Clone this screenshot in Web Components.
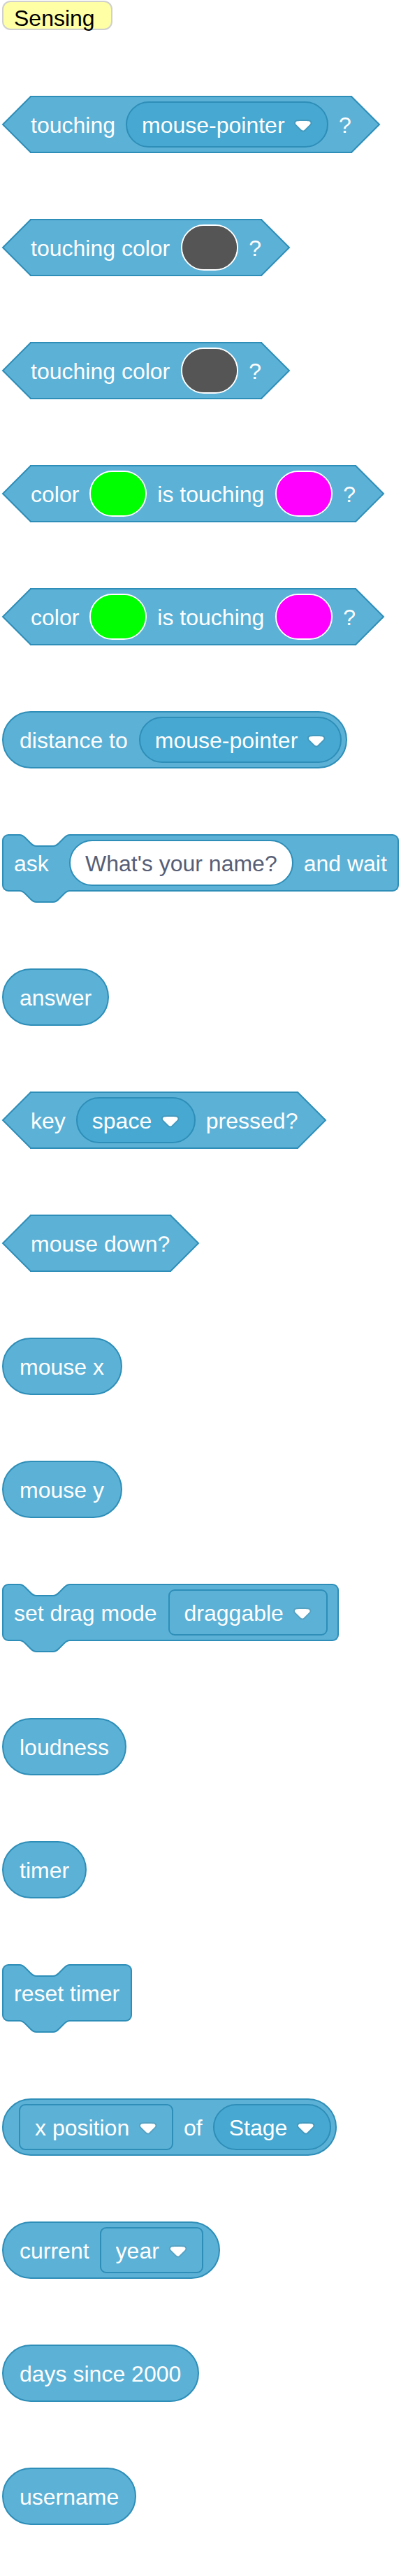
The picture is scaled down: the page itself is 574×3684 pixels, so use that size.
<!DOCTYPE html>
<html lang="en">
<head>
<meta charset="utf-8">
<title>Sensing blocks</title>
<style>
  body {
    margin: 0;
    background: #fff;
    color: #fff;
    font: 32px/36px "Liberation Sans", Arial, sans-serif;
    --primary: #5cb1d6;
    --secondary: #47a8d1;
    --outline: #2e8eb8;
  }
</style>
</head>
<body>
<block-palette>
  <palette-label>Sensing</palette-label>

  <boolean-block>
    <block-text>touching</block-text>
    <block-menu round name="object" value="mouse-pointer"></block-menu>
    <block-text>?</block-text>
  </boolean-block>

  <boolean-block>
    <block-text phrase>touching color</block-text>
    <block-color name="color" value="#555555"></block-color>
    <block-text>?</block-text>
  </boolean-block>

  <boolean-block>
    <block-text phrase>touching color</block-text>
    <block-color name="color" value="#555555"></block-color>
    <block-text>?</block-text>
  </boolean-block>

  <boolean-block>
    <block-text>color</block-text>
    <block-color name="first color" value="#00ff00"></block-color>
    <block-text phrase>is touching</block-text>
    <block-color name="second color" value="#ff00ff"></block-color>
    <block-text>?</block-text>
  </boolean-block>

  <boolean-block>
    <block-text>color</block-text>
    <block-color name="first color" value="#00ff00"></block-color>
    <block-text phrase>is touching</block-text>
    <block-color name="second color" value="#ff00ff"></block-color>
    <block-text>?</block-text>
  </boolean-block>

  <reporter-block snug>
    <block-text phrase>distance to</block-text>
    <block-menu round name="target" value="mouse-pointer"></block-menu>
  </reporter-block>

  <stack-block>
    <block-text lead>ask</block-text>
    <block-input name="question" value="What's your name?"></block-input>
    <block-text>and wait</block-text>
  </stack-block>

  <reporter-block><block-text>answer</block-text></reporter-block>

  <boolean-block>
    <block-text>key</block-text>
    <block-menu round name="key" value="space"></block-menu>
    <block-text>pressed?</block-text>
  </boolean-block>

  <boolean-block><block-text phrase>mouse down?</block-text></boolean-block>
  <reporter-block><block-text phrase>mouse x</block-text></reporter-block>
  <reporter-block><block-text phrase>mouse y</block-text></reporter-block>

  <stack-block>
    <block-text phrase>set drag mode</block-text>
    <block-menu name="drag mode" value="draggable"></block-menu>
  </stack-block>

  <reporter-block><block-text>loudness</block-text></reporter-block>
  <reporter-block><block-text>timer</block-text></reporter-block>
  <stack-block><block-text phrase>reset timer</block-text></stack-block>

  <reporter-block snug>
    <block-menu name="property" value="x position"></block-menu>
    <block-text>of</block-text>
    <block-menu round name="sprite" value="Stage"></block-menu>
  </reporter-block>

  <reporter-block>
    <block-text>current</block-text>
    <block-menu name="unit" value="year"></block-menu>
  </reporter-block>

  <reporter-block><block-text phrase>days since 2000</block-text></reporter-block>
  <reporter-block><block-text>username</block-text></reporter-block>
</block-palette>

<script>
  const define = (name, markup, setup) => {
    const template = document.createElement('template');
    template.innerHTML = markup;
    customElements.define(name, class extends HTMLElement {
      constructor() {
        super();
        this.attachShadow({ mode: 'open' }).append(template.content.cloneNode(true));
      }
      connectedCallback() {
        if (setup) setup(this, this.shadowRoot);
      }
    });
  };

  define('block-palette', `
    <style>
      :host { display: flex; flex-direction: column; align-items: flex-start; gap: 94px; padding: 1px 3px 73px; }
    </style>
    <slot></slot>`);

  define('palette-label', `
    <style>
      :host {
        display: block; box-sizing: border-box; min-width: 158px; height: 42px;
        padding: 5px 15px 0; border: 2px solid #d0d0d0; border-radius: 12px;
        background: #ffffa5; color: #000;
      }
    </style>
    <slot></slot>`);

  define('block-text', `
    <style>
      :host { display: block; padding-top: 2px; white-space: nowrap; }
      /* Keeps the first field of a stack block clear of the notch. */
      :host([lead]) { min-width: 64px; }
      :host([phrase]) { padding-right: 1px; }
    </style>
    <slot></slot>`);

  // Hexagon: two pointed caps joined by a bordered bar.
  define('boolean-block', `
    <style>
      :host { display: flex; height: 82px; }
      svg { display: block; flex: none; width: 41px; height: 82px; overflow: visible; position: relative; }
      path { fill: var(--primary); stroke: var(--outline); stroke-width: 2; }
      div {
        display: flex; align-items: center; gap: 15px; box-sizing: border-box;
        margin: 0 -1px; padding: 0 1px;
        border: solid var(--outline); border-width: 2px 0; background: var(--primary);
      }
    </style>
    <svg viewBox="0 0 41 82" aria-hidden="true"><path d="M41 1L1 41L41 81"/></svg>
    <div><slot></slot></div>
    <svg viewBox="0 0 41 82" aria-hidden="true"><path d="M0 1L40 41L0 81"/></svg>`);

  define('reporter-block', `
    <style>
      :host {
        display: flex; align-items: center; gap: 15px; box-sizing: border-box; height: 82px;
        padding: 0 23px; border: 2px solid var(--outline); border-radius: 41px; background: var(--primary);
      }
      :host([snug]) { padding-right: 6px; }
      ::slotted(block-menu:first-child) { margin-left: -1px; }
      ::slotted(block-menu:last-child:not([round])) { margin-right: -1px; }
    </style>
    <slot></slot>`);

  // Stack block: the shape lies behind the content; its left part carries notch and tab.
  define('stack-block', `
    <style>
      :host { display: grid; height: 98px; }
      .shape, .content { grid-area: 1 / 1; display: flex; height: 82px; }
      .content { position: relative; align-items: center; gap: 15px; padding: 0 17px; }
      ::slotted(block-menu:last-child) { margin-right: -1px; }
      svg { display: block; flex: none; width: 100px; height: 98px; }
      path { fill: var(--primary); stroke: var(--outline); stroke-width: 2; }
      .bar {
        flex: 1; box-sizing: border-box; border: 2px solid var(--outline); border-left: 0;
        border-radius: 0 9px 9px 0; background: var(--primary);
      }
    </style>
    <div class="shape">
      <svg viewBox="0 0 100 98" aria-hidden="true">
        <path d="M101 1H97c-4 0-6 2-8 4l-8 8c-2 2-4 4-8 4H49c-4 0-6-2-8-4l-8-8c-2-2-4-4-8-4H9a8 8 0 0 0-8 8V73a8 8 0 0 0 8 8H25c4 0 6 2 8 4l8 8c2 2 4 4 8 4H73c4 0 6-2 8-4l8-8c2-2 4-4 8-4H101"/>
      </svg>
      <div class="bar"></div>
    </div>
    <div class="content"><slot></slot></div>`);

  define('block-menu', `
    <style>
      :host { display: grid; align-items: center; height: 66px; }
      select, svg { grid-area: 1 / 1; }
      select {
        appearance: none; box-sizing: border-box; height: 66px; margin: 0; padding: 2px 60px 0 21px;
        border: 2px solid var(--outline); border-radius: 9px; outline: 0;
        background: var(--primary); color: inherit; font: inherit;
      }
      :host([round]) select { border-radius: 33px; background: var(--secondary); }
      svg { display: block; width: 26px; height: 18px; margin: 4px 23px 0 0; justify-self: end; pointer-events: none; position: relative; }
    </style>
    <select><option></option></select>
    <svg viewBox="0 0 13 9" aria-hidden="true">
      <path d="M12.71 2.44A2.41 2.41 0 0 1 12 4.16L8.08 8.08a2.45 2.45 0 0 1-3.45 0L.72 4.16A2.42 2.42 0 0 1 0 2.44 2.48 2.48 0 0 1 .71.71C1 .47 1.43 0 6.36 0s5.39.46 5.64.71a2.44 2.44 0 0 1 .71 1.73z" fill="#231f20" opacity=".1"/>
      <path d="M6.36 7.79a1.43 1.43 0 0 1-1-.42L1.42 3.45a1.44 1.44 0 0 1 0-2c.56-.56 9.31-.56 9.87 0a1.44 1.44 0 0 1 0 2L7.37 7.37a1.43 1.43 0 0 1-1.01.42z" fill="#fff"/>
    </svg>`, (host, root) => {
      root.querySelector('option').textContent = host.getAttribute('value');
      root.querySelector('select').setAttribute('aria-label', host.getAttribute('name'));
    });

  define('block-color', `
    <style>
      :host { display: block; height: 66px; }
      input {
        appearance: none; display: block; box-sizing: border-box; width: 82px; height: 66px; margin: 0; padding: 0;
        border: 2px solid #fff; border-radius: 33px; overflow: hidden; background: var(--value);
      }
      input::-webkit-color-swatch-wrapper { padding: 0; }
      input::-webkit-color-swatch { border: 0; border-radius: 31px; }
    </style>
    <input type="color">`, (host, root) => {
      const input = root.querySelector('input');
      input.value = host.getAttribute('value');
      input.style.setProperty('--value', input.value);
      input.setAttribute('aria-label', host.getAttribute('name'));
    });

  define('block-input', `
    <style>
      :host { display: block; height: 66px; }
      input {
        display: block; box-sizing: border-box; field-sizing: content; height: 66px; margin: 0; padding: 2px 21px 0;
        border: 2px solid var(--outline); border-radius: 33px; outline: 0;
        background: #fff; color: #575e75; font: inherit;
      }
    </style>
    <input type="text">`, (host, root) => {
      const input = root.querySelector('input');
      input.value = host.getAttribute('value');
      input.setAttribute('aria-label', host.getAttribute('name'));
    });
</script>
</body>
</html>
